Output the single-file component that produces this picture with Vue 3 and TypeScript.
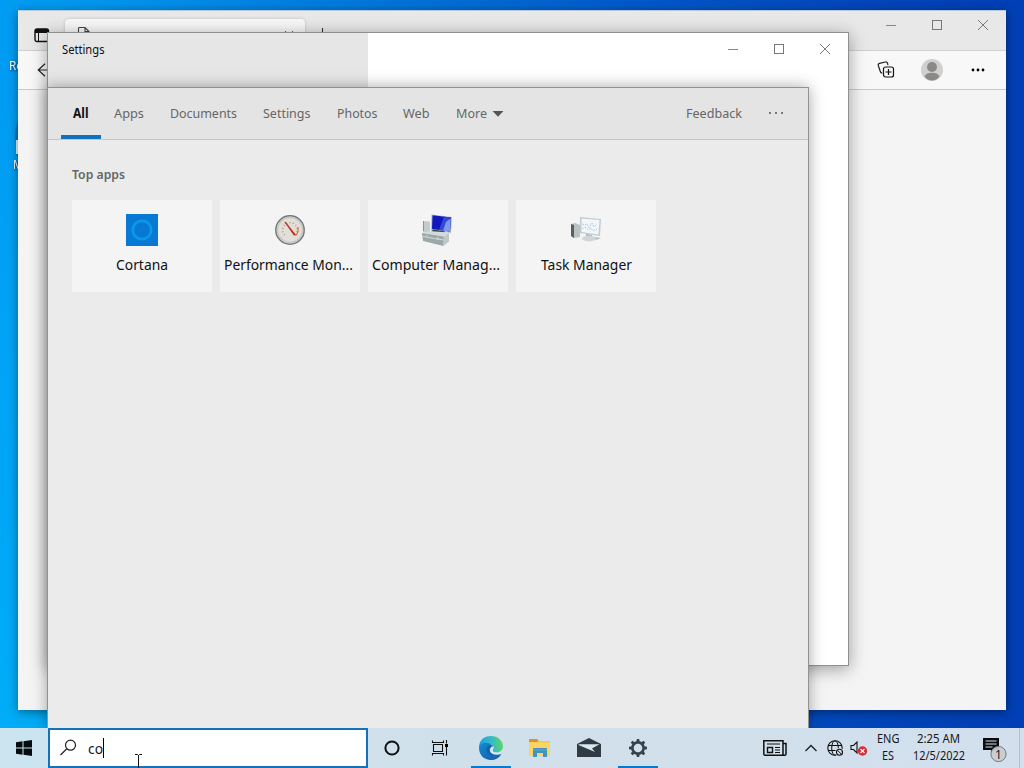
<script setup lang="ts">
import { defineComponent, h } from 'vue'

// Single line of text fitted to a fixed advance width; baseline sits 15px below the top.
const Label = defineComponent({
  props: {
    text: { type: String, required: true },
    w: { type: Number, required: true },
    size: { type: Number, default: 13.3 },
    weight: { type: Number, default: 400 },
  },
  setup(p) {
    return () =>
      h('svg', { width: p.w, height: 20, overflow: 'visible' }, [
        h(
          'text',
          { x: 0, y: 15, 'font-size': p.size, 'font-weight': p.weight, fill: 'currentColor', textLength: p.w, lengthAdjust: 'spacingAndGlyphs' },
          p.text,
        ),
      ])
  },
})

interface Tab { text: string; w: number }
const tabs: Tab[] = [
  { text: 'Apps', w: 30 },
  { text: 'Documents', w: 67 },
  { text: 'Settings', w: 47.5 },
  { text: 'Photos', w: 40.5 },
  { text: 'Web', w: 26.5 },
  { text: 'More', w: 31 },
]
const apps = [
  { id: 'cortana', text: 'Cortana', w: 52 },
  { id: 'perf', text: 'Performance Mon...', w: 129 },
  { id: 'comp', text: 'Computer Manag...', w: 128 },
  { id: 'task', text: 'Task Manager', w: 91 },
]
const ticks = Array.from({ length: 11 }, (_, i) => -130 + i * 26)
const teeth = Array.from({ length: 8 }, (_, i) => i * 45)
</script>

<template>
  <div class="desktop">
    <div class="shortcut recycle"><Label text="Re" :w="14" :size="12" /></div>
    <div class="shortcut edge-link">
      <svg width="14" height="42"><path d="M14 0Q10 10 12 20H14z" fill="#0878c4" /><path d="M12 19h2v14h-2z" fill="#e4f2fa" /></svg>
      <Label text="Mi" :w="13" :size="12" />
    </div>

    <section class="window browser">
      <header class="tabstrip">
        <svg class="tab-actions" width="16" height="15" viewBox="0 0 16 15"><rect x="1" y="1" width="13.5" height="12.5" rx="2" fill="none" stroke="#111" stroke-width="1.4" /><path d="M1 4V2q0-1 1-1h12v4H1z" fill="#111" /><path d="M4.5 4v10" stroke="#111" /></svg>
        <div class="browser-tab">
          <svg width="14" height="16" viewBox="0 0 14 16"><path d="M1.5 15V1.500q0-1 1-1H8l4 4V15zM8 .5v4h4" fill="none" stroke="#444" stroke-width="1.1" /></svg>
          <Label text="www.microsoft.com" :w="112" :size="12" />
          <svg class="tab-close" width="10" height="10"><path d="M1 1l8 8M9 1L1 9" stroke="#555" /></svg>
        </div>
        <svg class="new-tab" width="14" height="14"><path d="M7.500 0v14M0 7h14" stroke="#333" stroke-width="1.1" /></svg>
        <div class="controls">
          <svg width="10" height="10"><path d="M0 5.5h10" stroke="#888" /></svg>
          <svg width="10" height="10"><rect x=".5" y=".5" width="9" height="9" fill="none" stroke="#777" /></svg>
          <svg width="10" height="10"><path d="M0 0l10 10M10 0L0 10" stroke="#777" /></svg>
        </div>
      </header>
      <div class="toolbar">
        <svg class="back" width="16" height="14" viewBox="0 0 16 14"><path d="M8 .8L1.3 7 8 13.2M1.3 7H16" fill="none" stroke="#222" stroke-width="1.2" /></svg>
        <div class="tools">
          <svg width="14" height="12"><path d="M0 2.500h14M0 6.500h14M0 9.500h14" stroke="#333" /></svg>
          <svg width="18" height="18" viewBox="0 0 18 18"><path d="M5.2 12.2Q3.7 12 3.3 10.500L1.300 4.500Q.8 2.800 2.500 2.300L8.500 1Q10 .7 10.500 2.200L11 4" fill="none" stroke="#222" stroke-width="1.2" /><rect x="6.500" y="6" width="10" height="10" rx="2" fill="#f8f8f8" stroke="#111" stroke-width="1.2" /><path d="M11.500 8v6M8.500 11h6" stroke="#111" stroke-width="1.2" /></svg>
          <svg width="22" height="22" viewBox="0 0 22 22"><circle cx="11" cy="11" r="11" fill="#d0cfce" /><circle cx="11" cy="8" r="5" fill="#8b8987" /><path d="M3.600 17.500Q5 13.800 11 13.800t7.400 3.700Q15.500 21.500 11 21.500T3.600 17.500z" fill="#8b8987" /></svg>
          <svg width="14" height="4"><circle cx="2" cy="2" r="1.400" /><circle cx="7" cy="2" r="1.400" /><circle cx="12" cy="2" r="1.400" /></svg>
        </div>
      </div>
    </section>

    <section class="window settings">
      <div class="pane"><Label text="Settings" :w="42.500" :size="12" /></div>
      <div class="controls">
        <svg width="10" height="10"><path d="M0 5.500h10" stroke="#888" /></svg>
        <svg width="10" height="10"><rect x=".5" y=".5" width="9" height="9" fill="none" stroke="#777" /></svg>
        <svg width="10" height="10"><path d="M0 0l10 10M10 0L0 10" stroke="#777" /></svg>
      </div>
    </section>

    <section class="window search">
      <nav class="tabs">
        <div class="active"><Label text="All" :w="15.500" :weight="700" /></div>
        <Label v-for="t in tabs" :key="t.text" class="tab" :text="t.text" :w="t.w" />
        <svg class="caret" width="12" height="6"><path d="M.5 0h11L6 5.700z" fill="#555" /></svg>
        <Label class="feedback" text="Feedback" :w="56" />
        <svg class="dots" width="16" height="4"><path d="M1 1h2v2H1zM7 1h2v2H7zM13 1h2v2h-2z" fill="#777" /></svg>
      </nav>
      <div class="results">
        <Label class="heading" text="Top apps" :w="53" :size="13" :weight="600" />
        <div class="cards">
          <div v-for="a in apps" :key="a.id" class="card">
            <svg v-if="a.id === 'cortana'" width="32" height="32"><path d="M0 0h32v32H0z" fill="#0878d5" /><circle cx="16" cy="16" r="9.500" fill="none" stroke="#0c98e6" stroke-width="2.200" /><circle cx="16" cy="16" r="8.300" fill="none" stroke="#08a9eb" stroke-width=".7" /></svg>
            <svg v-else-if="a.id === 'perf'" width="32" height="32">
              <circle cx="16" cy="16" r="14.200" fill="#e5e1dc" stroke="#73787a" stroke-width="1.500" />
              <circle cx="16" cy="16" r="12.500" fill="#e3ded7" stroke="#c5c7c5" stroke-width="1.500" />
              <path d="M23.500 12A8 8 0 0 1 20.500 22L17 17z" fill="#f3d8c5" />
              <path v-for="t in ticks" :key="t" d="M16 8v1.300" stroke="#817b72" stroke-width=".8" :transform="`rotate(${t} 16 16)`" />
              <path d="M11 8L21 21" stroke="#b53b30" stroke-width="1.500" /><path d="M14 13l6 8.500 1.500-1z" fill="#b52d24" /><path d="M24 13q1 4-1.500 8h-2" fill="none" stroke="#c05b40" />
            </svg>
            <svg v-else-if="a.id === 'comp'" width="32" height="32">
              <path d="M1 7l7 .5V19l-7-1z" fill="#c4cbcb" /><path d="M1.500 7v10" stroke="#8c9393" />
              <path d="M9.500.5L30 3l-1 16-20-2.500z" fill="#b4bec6" /><path d="M10.500 1.200L29 3.500 28 17.500 10 15z" fill="#1119bd" /><path d="M22 2.700l7 .8-1 14-11-1.400z" fill="#3149d5" /><path d="M24 8l4.700-3.500-.7 13-7-.8z" fill="#8298ea" />
              <path d="M11 15.500l12 2-1 2.500H8z" fill="#34434b" />
              <path d="M0 19l7-2 20 1.500-5 4z" fill="#d4dbdc" /><path d="M0 19l22 3.500-.5 9.500L1 27z" fill="#9da8a8" /><path d="M22 22.500l5-4v9L21.500 32z" fill="#c0c9ca" /><path d="M1 22.500l20.500 3.500M5 21v2M16 23v3" stroke="#dfe5e4" stroke-width=".8" />
            </svg>
            <svg v-else width="32" height="32">
              <path d="M1 10l4-1 5 2v12l-6 1-3-2z" fill="#bcc1c2" /><path d="M1 10l3 1v13l-3-2z" fill="#596063" />
              <path d="M10 3l21 2-1 17-20-3z" fill="#c2cbd0" /><path d="M11.500 4.500L29.500 6l-1 14.500-17-2.500z" fill="#f1f6fa" />
              <path d="M12 10l3 1 2-1 2 4 3-5 2 4 3-3M12 15l3-2 3 3 3-2 2 3 4-2" fill="none" stroke="#9bbcd5" stroke-width=".7" stroke-dasharray="2 1" />
              <path d="M16 20l6 1v3h-6z" fill="#aab3b6" /><ellipse cx="19" cy="24.500" rx="7" ry="3" fill="#d0d6d7" /><path d="M25 23l6 1-5 2z" fill="#b4bec0" />
            </svg>
            <Label :text="a.text" :w="a.w" :size="14.7" :class="{ clipped: a.w > 120 }" />
          </div>
        </div>
      </div>
    </section>

    <footer class="taskbar">
      <div class="start"><svg width="16" height="16"><path d="M0 2.300L6.500 1.300V7.500H0zM7.500 1.200L16 0V7.500H7.500zM0 8.500H6.500V14.700L0 13.700zM7.500 8.500H16V16L7.500 14.800z" fill="#050b0e" /></svg></div>
      <div class="input">
        <svg width="17" height="17" viewBox="0 0 17 17"><circle cx="10.500" cy="6.200" r="5" fill="none" stroke="#222" stroke-width="1.200" /><path d="M6.800 9.800L.5 16" stroke="#222" stroke-width="1.200" /></svg>
        <Label text="co" :w="15" :size="14.7" /><i class="text-caret"></i>
      </div>
      <div class="buttons">
        <div class="narrow"><svg width="18" height="18"><circle cx="9" cy="9" r="6.600" fill="none" stroke="#0b1013" stroke-width="2" /></svg></div>
        <div class="narrow view"><svg width="18" height="18"><path d="M1.500 1.500v2h11v-2M1.500 16.500v-2h11v2M2.500 5.500h9v7h-9zM15.500 1v3.500M15.500 8v8.500" fill="none" stroke="#111" stroke-width="1.100" /><path d="M14 5h3v3h-3z" /></svg></div>
        <div class="running">
          <svg width="26" height="26" viewBox="0 0 26 26">
            <defs>
              <linearGradient id="edgeTop" x1="0" y1="0.500" x2="1" y2="0.400"><stop offset="0" stop-color="#1f9bdc" /><stop offset=".55" stop-color="#35bcc6" /><stop offset="1" stop-color="#62d65f" /></linearGradient>
              <linearGradient id="edgeBody" x1="0" y1="0" x2=".9" y2="1"><stop offset="0" stop-color="#168bd1" /><stop offset="1" stop-color="#155aab" /></linearGradient>
            </defs>
            <path d="M1 13C1 5 6 1 13 1c7 0 12 5 12 10 0 4-3 6.500-6.500 6.500-3 0-4.300-1.200-4-2.200 1.600-1.600.9-6-4-6C6 9.300 2 11 1 13z" fill="url(#edgeTop)" />
            <path d="M1 13C1.500 8.500 7 6.800 11 8.300c2.500 1 3.600 3.200 2.500 4.700-2 0-3.500 2-2.500 4.500 1.500 4 7 5 12.500 1.500C21 23 17.500 25 13 25 6 25 1 20 1 13z" fill="url(#edgeBody)" />
            <path d="M8.500 14q1-4.500 5-3.700c2.500 1 2 3.700.5 4.700-1.700 1.500.3 4 5 3.500 2-.2 4-1 4.700-.8-1 2.500-3.700 4-6.700 3.800C11 21 8 18 8.500 14z" fill="#1561b0" />
            <path d="M15.500 11.500c1 1.500-.9 2.800-.9 4 .2 1.500 2 2.300 4.500 2.200 2 0 3.500-.6 5-1.700l-.4 2.500c-3 1.600-7.200 1.600-9.500.3-2.800-1.600-3.300-5.600-.3-7.300z" fill="#d5e8ec" />
          </svg>
        </div>
        <div><svg width="24" height="22"><path d="M1 3q0-1 1-1h7l2 2h10q1 0 1 1v14H1z" fill="#f5c84d" /><path d="M1 3q0-1 1-1h7l1.500 2-1.500 1H1z" fill="#d99526" /><path d="M1 5.500h21V19H1z" fill="#fbd466" /><path d="M5 20v-8q0-1 1-1h12q1 0 1 1v8h-4v-4H9v4z" fill="#3f94bd" /><path d="M5 13h14" stroke="#5caacc" /></svg></div>
        <div><svg width="24" height="20"><path d="M0 6L12 0l12 6v13H0z" fill="#303b43" /><path d="M1.500 6.300h21L15 10.500l3 3.500L1.500 7z" fill="#d9e7ef" /></svg></div>
        <div class="running"><svg width="20" height="20"><circle cx="10" cy="10" r="5.600" fill="none" stroke="#38444b" stroke-width="2.600" /><path v-for="t in teeth" :key="t" d="M8.300 4L8.800 1h2.400l.5 3z" fill="#38444b" :transform="`rotate(${t} 10 10)`" /></svg></div>
      </div>
      <div class="tray">
        <svg class="news" width="24" height="16"><path d="M20 3.500h3V14q0 1.300-1.500 1.300H2.300Q.8 15.300.8 14V.800H20V14q0 1.300 1.500 1.300" fill="none" stroke="#111" stroke-width="1.500" /><path d="M4 4h13M12 7.500h5M12 10h5M12 12.500h5" stroke="#111" stroke-width="1.200" /><path d="M4.500 7.500h5v5h-5z" fill="none" stroke="#111" stroke-width="1.400" /></svg>
        <svg class="up" width="12" height="8"><path d="M.5 7L6 1.500 11.500 7" fill="none" stroke="#1b2024" stroke-width="1.300" /></svg>
        <svg class="globe" width="17" height="17"><circle cx="8" cy="8" r="7.200" fill="none" stroke="#111" stroke-width="1.100" /><ellipse cx="8" cy="8" rx="3.300" ry="7.200" fill="none" stroke="#111" /><path d="M1 5.500h14M1 10.500h14" stroke="#111" /><circle cx="12.500" cy="12.300" r="4.400" fill="#d2dfeb" /><circle cx="12.500" cy="12.300" r="3" fill="none" stroke="#111" stroke-width="1.100" /><path d="M10.500 10.300l4 4" stroke="#111" /></svg>
        <svg class="sound" width="18" height="17"><path d="M1 5.500h2.500L7 2v11L3.500 9.500H1z" fill="none" stroke="#111" stroke-width="1.100" /><circle cx="12.500" cy="11" r="4.700" fill="#d52c35" /><path d="M10.500 9l4 4M14.500 9l-4 4" stroke="#fff" stroke-width="1.100" /></svg>
        <div class="lines lang"><Label text="ENG" :w="22.500" :size="12" /><Label text="ES" :w="12" :size="12" /></div>
        <div class="lines clock"><Label text="2:25 AM" :w="43" :size="12" /><Label text="12/5/2022" :w="52" :size="12" /></div>
        <div class="notice">
          <svg width="26" height="26"><path d="M1 1h16v12h-5l-3 3v-3H1z" fill="#080c10" /><path d="M3.500 4h11M3.500 7h11M3.500 10h7" stroke="#d4dfed" /><circle cx="16.500" cy="17" r="7.600" fill="#c8cccf" fill-opacity=".93" stroke="#767b80" /><text x="16.500" y="21.500" text-anchor="middle" font-size="12" fill="#222">1</text></svg>
        </div>
      </div>
    </footer>
    <svg class="pointer" width="7" height="14"><path d="M0 .5h2.500l1 1 1-1H7M3.500 1v13" fill="none" stroke="#111" /></svg>
  </div>
</template>

<style>
html, body { margin: 0; overflow: hidden; }
</style>

<style scoped>
.desktop { position: relative; width: 1024px; height: 768px; overflow: hidden; font-family: "Noto Sans", "Open Sans", sans-serif; background: linear-gradient(180deg, transparent 10%, rgba(0, 190, 255, .22) 45%, rgba(0, 200, 255, .4)) left / 48px 100% no-repeat, linear-gradient(90deg, #009cf3 0, #0095ec 10%, #0076db 36%, #0056c8 64%, #0045b9 85%, #003fb5 98%); }
svg { display: block; flex: none; }
.shortcut { position: absolute; color: #fff; filter: drop-shadow(1px 1px 1px #002c50); }
.recycle { left: 9px; top: 55px; }
.edge-link { left: 4px; top: 121px; }
.edge-link svg:last-child { margin: -9px 0 0 9px; }
.window { position: absolute; box-sizing: border-box; }
.browser { left: 18px; top: 10px; width: 988px; height: 700px; background: #f4f4f4; border-top: 1px solid #b7c9d8; box-shadow: 0 2px 9px rgba(0, 0, 0, .42); }
.tabstrip { display: flex; height: 40px; background: #e8e8e8; border-bottom: 1px solid #d0d0d0; box-sizing: border-box; overflow: hidden; }
.tab-actions { margin: 17px 0 0 16px; }
.browser-tab { display: flex; width: 240px; height: 32px; margin: 8px 0 0 15px; background: #f8f8f8; border-radius: 4px 4px 0 0; box-shadow: 0 0 3px #bbb; color: #333; gap: 11px; box-sizing: border-box; padding: 8px 11px 0 12px; }
.tab-close { margin: 3px 0 0 auto; }
.new-tab { margin: 17px 0 0 10px; }
.controls { display: flex; gap: 36px; margin-left: auto; }
.tabstrip .controls { padding: 9px 18px 0 0; }
.toolbar { display: flex; align-items: center; justify-content: space-between; height: 39px; background: #f8f8f8; border-bottom: 1px solid #cacaca; box-sizing: border-box; padding: 0 21px 0 19px; }
.tools { display: flex; align-items: center; }
.tools svg:nth-child(2) { margin-left: 27px; }
.tools svg:nth-child(3) { margin-left: 26px; }
.tools svg:nth-child(4) { margin-left: 28px; }
.settings { display: flex; left: 47px; top: 32px; width: 802px; height: 634px; background: #fff; border: 1px solid #909090; box-shadow: 0 3px 16px rgba(0, 0, 0, .36); }
.pane { width: 320px; background: #e6e6e6; color: #111; box-sizing: border-box; padding: 6px 14px; }
.settings .controls { padding: 11px 18px 0 0; }
.tools svg:first-child { margin-right: 1px; }
.search { left: 47px; top: 87px; width: 762px; height: 642px; background: #ebebeb; border: 1px solid #929292; box-shadow: 0 0 14px rgba(0, 0, 0, .34); }
.tabs { display: flex; height: 52px; box-sizing: border-box; padding: 15px 24px 0 13px; background: #e4e4e4; border-bottom: 1px solid #c6c6c6; color: #666; }
.active { width: 40px; height: 36px; box-sizing: border-box; padding-left: 12px; margin-right: 13px; border-bottom: 4px solid #1371bc; color: #111; }
.tab { margin-right: 26px; }
.caret { margin: 8px 0 0 -21px; }
.feedback { margin-left: auto; }
.dots { margin: 8px 0 0 26px; }
.results { padding: 24px 24px; }
.heading { color: #666; }
.cards { display: flex; gap: 8px; margin-top: 16px; }
.card { display: flex; flex-direction: column; align-items: center; width: 140px; height: 92px; box-sizing: border-box; padding-top: 14px; gap: 9px; background: #f4f4f4; color: #111; }
.clipped { margin-right: 4px; }
.taskbar { position: absolute; left: 0; bottom: 0; width: 1024px; height: 40px; display: flex; background: linear-gradient(90deg, #cbe4ef, #d0e0ea 45%, #d3dfed); color: #15191c; }
.start { display: flex; width: 48px; align-items: center; justify-content: center; }
.input { display: flex; width: 320px; box-sizing: border-box; border: 2px solid #1472bd; background: #fff; padding: 9px 0 0 10px; }
.input svg:nth-child(2) { margin-left: 11px; }
.text-caret { width: 1px; height: 20px; background: #000; margin-left: 0; margin-top: -1px; }
.buttons { display: flex; }
.buttons > div { width: 49px; height: 40px; display: flex; align-items: center; justify-content: center; box-sizing: border-box; }
.buttons .narrow { width: 48px; }
.buttons .view { margin-right: 2px; }
.buttons .running { background: linear-gradient(#0878d0, #0878d0) center bottom / 40px 2px no-repeat; }
.tray { display: flex; align-items: center; margin-left: auto; width: 261px; box-sizing: border-box; }
.up { margin-left: 18px; }
.globe { margin-left: 10px; }
.sound { margin-left: 6px; }
.lines { display: flex; flex-direction: column; align-items: center; height: 40px; }
.lines svg { height: 17px; }
.lang { margin-left: 9px; }
.clock { margin-left: 13px; }
.notice { display: flex; align-items: center; flex: 1; height: 40px; margin-right: 4px; padding: 4px 0 0 17px; box-sizing: border-box; border-right: 1px solid #b5c2cf; }
.pointer { position: absolute; left: 135px; top: 754px; }
</style>
